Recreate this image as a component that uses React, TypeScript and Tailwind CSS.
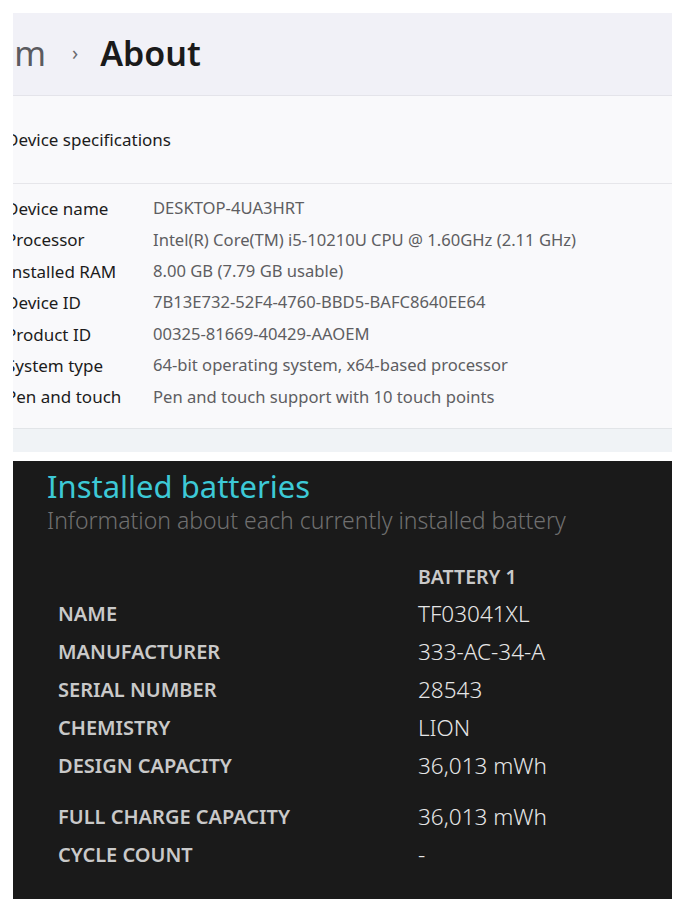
import React from "react";

const specs: [string, string][] = [
  ["Device name", "DESKTOP-4UA3HRT"],
  ["Processor", "Intel(R) Core(TM) i5-10210U CPU @ 1.60GHz (2.11 GHz)"],
  ["Installed RAM", "8.00 GB (7.79 GB usable)"],
  ["Device ID", "7B13E732-52F4-4760-BBD5-BAFC8640EE64"],
  ["Product ID", "00325-81669-40429-AAOEM"],
  ["System type", "64-bit operating system, x64-based processor"],
  ["Pen and touch", "Pen and touch support with 10 touch points"],
];

const battery: [string, string, boolean?][] = [
  ["NAME", "TF03041XL"],
  ["MANUFACTURER", "333-AC-34-A"],
  ["SERIAL NUMBER", "28543"],
  ["CHEMISTRY", "LION"],
  ["DESIGN CAPACITY", "36,013 mWh"],
  ["FULL CHARGE CAPACITY", "36,013 mWh", true],
  ["CYCLE COUNT", "-"],
];

export default function App() {
  return (
    <div
      className="min-h-[913px] bg-white px-[13px] pt-[13px]"
      style={{ fontFamily: '"Noto Sans", "Open Sans", sans-serif' }}
    >
      <div className="overflow-hidden bg-[#f9f9fb]">
        <div className="flex h-[83px] items-center border-b border-[#e4e4ea] bg-[#f1f1f7] pb-[2px]">
          <div className="-ml-[18px] flex items-center">
            <span className="text-[34px] leading-none text-[#5b5b5f]">em</span>
            <span className="ml-[26px] text-[20px] leading-none text-[#6b6b6f]">›</span>
            <span className="ml-[22px] text-[34px] font-semibold leading-none text-[#1a1a1a]">About</span>
          </div>
        </div>
        <div className="flex h-[88px] items-center border-b border-[#e6e6ea]">
          <span className="-ml-[7px] text-[17px] text-[#1c1c1c]">Device specifications</span>
        </div>
        <div className="flex flex-col pb-[15px] pt-[9px]">
          {specs.map(([k, v]) => (
            <div key={k} className="flex h-[31.4px] items-center">
              <span className="-ml-[7px] w-[147px] shrink-0 text-[17px] text-[#1c1c1c]">{k}</span>
              <span className="text-[16.6px] text-[#5e5e62]">{v}</span>
            </div>
          ))}
        </div>
        <div className="h-[24px] border-t border-[#e2e5e8] bg-[#f0f3f6]" />
      </div>
      <div className="mt-[9px] h-[438px] bg-[#1a1a1a] pl-[34px] pt-[7px]">
        <div className="text-[31px] leading-[36px] text-[#3dc9d6]">Installed batteries</div>
        <div className="mt-[-1px] text-[23px] font-light leading-[34px] text-[#707070]">
          Information about each currently installed battery
        </div>
        <div className="mt-[22px] grid grid-cols-[360px_1fr] pl-[11px]">
          <div />
          <div className="h-[36px] text-[19.5px] font-semibold leading-[36px] text-[#c9c9c9]">BATTERY 1</div>
          {battery.map(([k, v, gap]) => (
            <React.Fragment key={k}>
              <div
                className={`${gap ? "mt-[13px]" : ""} h-[38px] text-[20px] font-semibold leading-[38px] text-[#c9c9c9]`}
              >
                {k}
              </div>
              <div
                className={`${gap ? "mt-[13px]" : ""} h-[38px] text-[22.5px] font-light leading-[38px] text-[#e6e6e6]`}
              >
                {v}
              </div>
            </React.Fragment>
          ))}
        </div>
      </div>
    </div>
  );
}
